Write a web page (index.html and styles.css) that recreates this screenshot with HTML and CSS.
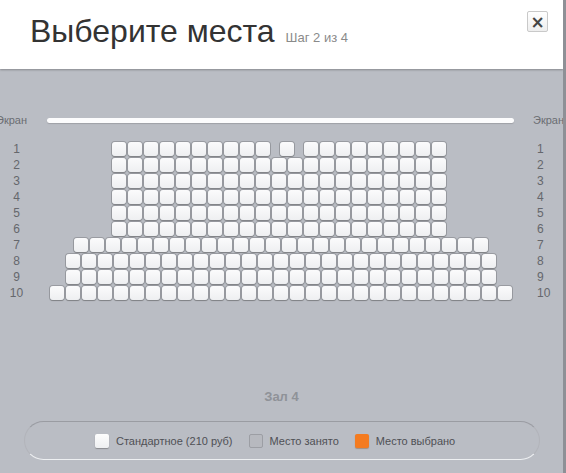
FILE: index.html
```html
<!DOCTYPE html>
<html lang="ru">
<head>
<meta charset="utf-8">
<title>Выберите места</title>
<link rel="stylesheet" href="styles.css">
</head>
<body>
<div class="modal">
  <header class="head">
    <h1 class="title">Выберите места <span class="step">Шаг 2 из 4</span></h1>
    <button class="close" type="button">×</button>
  </header>
  <main class="hall">
    <div class="screen">
      <div class="screen-label left"><span>Экран</span></div>
      <div class="screen-bar"></div>
      <div class="screen-label right">Экран</div>
    </div>
    <div class="rows">
      <div class="row"><span class="num">1</span><div class="seats narrow"><i class="s"></i><i class="s"></i><i class="s"></i><i class="s"></i><i class="s"></i><i class="s"></i><i class="s"></i><i class="s"></i><i class="s"></i><i class="s"></i><i class="s w"></i><i class="s w"></i><i class="s"></i><i class="s"></i><i class="s"></i><i class="s"></i><i class="s"></i><i class="s"></i><i class="s"></i><i class="s"></i></div><span class="num r">1</span></div>
      <div class="row"><span class="num">2</span><div class="seats narrow"><i class="s"></i><i class="s"></i><i class="s"></i><i class="s"></i><i class="s"></i><i class="s"></i><i class="s"></i><i class="s"></i><i class="s"></i><i class="s"></i><i class="s"></i><i class="s"></i><i class="s"></i><i class="s"></i><i class="s"></i><i class="s"></i><i class="s"></i><i class="s"></i><i class="s"></i><i class="s"></i><i class="s"></i></div><span class="num r">2</span></div>
      <div class="row"><span class="num">3</span><div class="seats narrow"><i class="s"></i><i class="s"></i><i class="s"></i><i class="s"></i><i class="s"></i><i class="s"></i><i class="s"></i><i class="s"></i><i class="s"></i><i class="s"></i><i class="s"></i><i class="s"></i><i class="s"></i><i class="s"></i><i class="s"></i><i class="s"></i><i class="s"></i><i class="s"></i><i class="s"></i><i class="s"></i><i class="s"></i></div><span class="num r">3</span></div>
      <div class="row"><span class="num">4</span><div class="seats narrow"><i class="s"></i><i class="s"></i><i class="s"></i><i class="s"></i><i class="s"></i><i class="s"></i><i class="s"></i><i class="s"></i><i class="s"></i><i class="s"></i><i class="s"></i><i class="s"></i><i class="s"></i><i class="s"></i><i class="s"></i><i class="s"></i><i class="s"></i><i class="s"></i><i class="s"></i><i class="s"></i><i class="s"></i></div><span class="num r">4</span></div>
      <div class="row"><span class="num">5</span><div class="seats narrow"><i class="s"></i><i class="s"></i><i class="s"></i><i class="s"></i><i class="s"></i><i class="s"></i><i class="s"></i><i class="s"></i><i class="s"></i><i class="s"></i><i class="s"></i><i class="s"></i><i class="s"></i><i class="s"></i><i class="s"></i><i class="s"></i><i class="s"></i><i class="s"></i><i class="s"></i><i class="s"></i><i class="s"></i></div><span class="num r">5</span></div>
      <div class="row"><span class="num">6</span><div class="seats narrow"><i class="s"></i><i class="s"></i><i class="s"></i><i class="s"></i><i class="s"></i><i class="s"></i><i class="s"></i><i class="s"></i><i class="s"></i><i class="s"></i><i class="s"></i><i class="s"></i><i class="s"></i><i class="s"></i><i class="s"></i><i class="s"></i><i class="s"></i><i class="s"></i><i class="s"></i><i class="s"></i><i class="s"></i></div><span class="num r">6</span></div>
      <div class="row"><span class="num">7</span><div class="seats"><i class="s"></i><i class="s"></i><i class="s"></i><i class="s"></i><i class="s"></i><i class="s"></i><i class="s"></i><i class="s"></i><i class="s"></i><i class="s"></i><i class="s"></i><i class="s"></i><i class="s"></i><i class="s"></i><i class="s"></i><i class="s"></i><i class="s"></i><i class="s"></i><i class="s"></i><i class="s"></i><i class="s"></i><i class="s"></i><i class="s"></i><i class="s"></i><i class="s"></i><i class="s"></i></div><span class="num r">7</span></div>
      <div class="row"><span class="num">8</span><div class="seats"><i class="s"></i><i class="s"></i><i class="s"></i><i class="s"></i><i class="s"></i><i class="s"></i><i class="s"></i><i class="s"></i><i class="s"></i><i class="s"></i><i class="s"></i><i class="s"></i><i class="s"></i><i class="s"></i><i class="s"></i><i class="s"></i><i class="s"></i><i class="s"></i><i class="s"></i><i class="s"></i><i class="s"></i><i class="s"></i><i class="s"></i><i class="s"></i><i class="s"></i><i class="s"></i><i class="s"></i></div><span class="num r">8</span></div>
      <div class="row"><span class="num">9</span><div class="seats"><i class="s"></i><i class="s"></i><i class="s"></i><i class="s"></i><i class="s"></i><i class="s"></i><i class="s"></i><i class="s"></i><i class="s"></i><i class="s"></i><i class="s"></i><i class="s"></i><i class="s"></i><i class="s"></i><i class="s"></i><i class="s"></i><i class="s"></i><i class="s"></i><i class="s"></i><i class="s"></i><i class="s"></i><i class="s"></i><i class="s"></i><i class="s"></i><i class="s"></i><i class="s"></i><i class="s"></i></div><span class="num r">9</span></div>
      <div class="row"><span class="num">10</span><div class="seats"><i class="s"></i><i class="s"></i><i class="s"></i><i class="s"></i><i class="s"></i><i class="s"></i><i class="s"></i><i class="s"></i><i class="s"></i><i class="s"></i><i class="s"></i><i class="s"></i><i class="s"></i><i class="s"></i><i class="s"></i><i class="s"></i><i class="s"></i><i class="s"></i><i class="s"></i><i class="s"></i><i class="s"></i><i class="s"></i><i class="s"></i><i class="s"></i><i class="s"></i><i class="s"></i><i class="s"></i><i class="s"></i><i class="s"></i></div><span class="num r">10</span></div>
    </div>
    <div class="hall-name">Зал 4</div>
    <div class="legend">
      <div class="item"><i class="box free"></i>Стандартное (210 руб)</div>
      <div class="item"><i class="box busy"></i>Место занято</div>
      <div class="item"><i class="box chosen"></i>Место выбрано</div>
    </div>
  </main>
</div>
</body>
</html>
```
FILE: styles.css
```css
html, body {
  margin: 0;
  padding: 0;
}
body {
  background: #8e9096;
  font-family: "Liberation Sans", Arial, sans-serif;
  width: 566px;
  height: 473px;
  overflow: hidden;
}
.modal {
  width: 563px;
  height: 473px;
  background: #babdc4;
  overflow: hidden;
}
.head {
  height: 69px;
  background: #fff;
  box-shadow: 0 1px 2px rgba(0, 0, 0, 0.28);
  display: flex;
  justify-content: space-between;
  align-items: flex-start;
  padding: 0 15px 0 30px;
  position: relative;
  z-index: 1;
}
.title {
  margin: 13px 0 0;
  font-size: 32px;
  font-weight: normal;
  line-height: 37px;
  color: #333;
  white-space: nowrap;
}
.step {
  font-size: 13px;
  color: #8a8a8a;
  margin-left: 2px;
}
.close {
  margin-top: 11px;
  width: 21px;
  height: 21px;
  padding: 0;
  border: 1px solid #c9c9c9;
  border-radius: 2px;
  background: linear-gradient(#ffffff, #eeeeee);
  color: #444;
  font-family: "DejaVu Sans", sans-serif;
  font-size: 17px;
  line-height: 18px;
  font-weight: bold;
}
.hall {
  display: flex;
  flex-direction: column;
}
.screen {
  display: flex;
  align-items: center;
  height: 12px;
  margin-top: 45px;
  font-size: 11px;
  color: #6b6d72;
}
.screen-label {
  white-space: nowrap;
  line-height: 12px;
}
.screen-label.left {
  width: 27px;
  display: flex;
  justify-content: flex-end;
  flex: none;
}
.screen-label.right {
  margin-left: 19px;
}
.screen-bar {
  width: 467px;
  height: 5px;
  margin-left: 20px;
  border-radius: 3px;
  background: #fcfcfd;
  box-shadow: 0 1px 1px rgba(0, 0, 0, 0.15);
  flex: none;
}
.rows {
  display: flex;
  flex-direction: column;
  gap: 2px;
  margin-top: 16px;
}
.row {
  display: flex;
  height: 14px;
  align-items: center;
}
.num {
  width: 33px;
  flex: none;
  text-align: center;
  font-size: 12px;
  line-height: 14px;
  color: #65676c;
}
.num.r {
  width: 26px;
  padding-left: 8px;
  text-align: left;
}
.seats {
  flex: 1;
  display: flex;
  justify-content: center;
  gap: 2px;
}
.seats.narrow {
  padding-right: 4px;
}
.s {
  display: block;
  width: 14px;
  height: 14px;
  border-radius: 3px;
  background: linear-gradient(#fbfbfc, #eeeff1);
  box-shadow: 0 0 0 1px rgba(120, 122, 126, 0.5), 0 1px 1px rgba(80, 80, 80, 0.45);
  flex: none;
}
.s.w {
  margin-left: 8px;
}
.hall-name {
  margin-top: 89px;
  text-align: center;
  font-size: 13px;
  font-weight: bold;
  line-height: 16px;
  color: #8f9298;
}
.legend {
  margin: 16px 0 0 24px;
  width: 516px;
  height: 39px;
  box-sizing: border-box;
  border: 1px solid #b2b4ba;
  border-top-color: #9a9ca2;
  border-bottom-color: #eef0f2;
  border-radius: 20px;
  display: flex;
  align-items: center;
  padding-left: 70px;
  font-size: 11px;
  color: #4f5055;
}
.item {
  display: flex;
  align-items: center;
  margin-right: 16px;
  white-space: nowrap;
}
.box {
  display: block;
  width: 14px;
  height: 14px;
  border-radius: 2px;
  margin-right: 7px;
  box-sizing: border-box;
}
.box.free {
  background: linear-gradient(#fdfdfd, #eeeff1);
  box-shadow: 0 1px 1px rgba(80, 80, 80, 0.45);
}
.box.busy {
  background: #b7b9bf;
  border: 1px solid #9c9ea4;
}
.box.chosen {
  background: #f47b20;
  box-shadow: 0 1px 1px rgba(120, 60, 0, 0.35);
}
```
